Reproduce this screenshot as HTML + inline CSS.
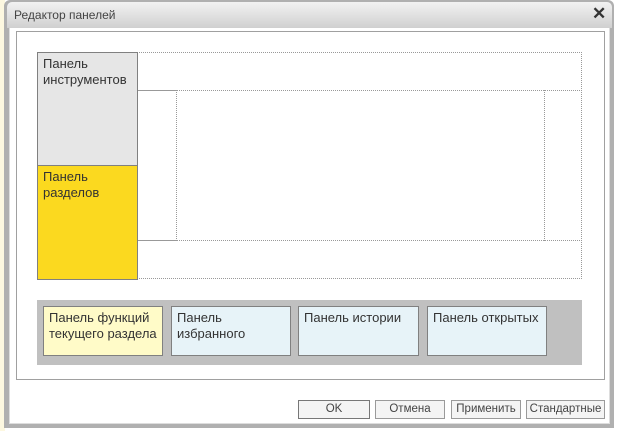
<!DOCTYPE html>
<html><head><meta charset="utf-8"><style>
body{margin:0;width:618px;height:431px;background:#fff;position:relative;overflow:hidden;font-family:"Liberation Sans",sans-serif;font-size:12px;color:#333}
.a{position:absolute;box-sizing:border-box}
.d{border:1px dotted #999}
.t{padding:3px 5px;line-height:16px;color:#333;font-size:13px}
.b{background:#f4f4f4;border:1px solid #9a9a9a;text-align:center;line-height:17px;font-size:11.5px;color:#444;white-space:nowrap}
</style></head><body>
<div class="a" style="left:0;top:0;width:5px;height:431px;background:#fdf8e0"></div>
<div class="a" style="left:4px;top:0;width:610px;height:428px;background:#b0b0b0;border-radius:6px 6px 0 0"></div>
<div class="a" style="left:9px;top:2px;width:601px;height:422px;background:#fff;border-radius:5px 5px 0 0;box-shadow:inset 0 0 0 1px #ddd"></div>
<div class="a" style="left:7px;top:2px;width:605px;height:26px;background:linear-gradient(#f2f2f2,#d0d0d0);border-radius:5px 5px 0 0"></div>
<div class="a" style="left:14px;top:8px;font-size:12px;color:#444">Редактор панелей</div>
<div class="a" style="left:592px;top:4px;font-size:17px;font-weight:bold;color:#333">✕</div>
<div class="a" style="left:16px;top:31px;width:589px;height:349px;border:1px solid #a0a0a0;background:#fff"></div>
<div class="a d" style="left:137px;top:52px;width:445px;height:39px"></div>
<div class="a d" style="left:137px;top:90px;width:40px;height:151px"></div>
<div class="a d" style="left:544px;top:90px;width:38px;height:151px"></div>
<div class="a d" style="left:137px;top:240px;width:445px;height:39px"></div>
<div class="a t" style="left:37px;top:52px;width:101px;height:114px;background:#e6e6e6;border:1px solid #808080">Панель<br>инструментов</div>
<div class="a t" style="left:37px;top:165px;width:101px;height:115px;background:#fbd91f;border:1px solid #808080">Панель<br>разделов</div>
<div class="a" style="left:37px;top:300px;width:545px;height:65px;background:#c0c0c0"></div>
<div class="a t" style="left:43px;top:306px;width:120px;height:50px;background:#fffbc8;border:1px solid #808080">Панель функций<br>текущего раздела</div>
<div class="a t" style="left:171px;top:306px;width:120px;height:50px;background:#e7f3f8;border:1px solid #808080">Панель<br>избранного</div>
<div class="a t" style="left:298px;top:306px;width:121px;height:50px;background:#e7f3f8;border:1px solid #808080">Панель истории</div>
<div class="a t" style="left:427px;top:306px;width:120px;height:50px;background:#e7f3f8;border:1px solid #808080">Панель открытых</div>
<div class="a b" style="left:298px;top:400px;width:72px;height:19px;border-color:#777">OK</div>
<div class="a b" style="left:375px;top:400px;width:70px;height:19px">Отмена</div>
<div class="a b" style="left:451px;top:400px;width:70px;height:19px">Применить</div>
<div class="a b" style="left:526px;top:400px;width:79px;height:19px">Стандартные</div>
</body></html>
